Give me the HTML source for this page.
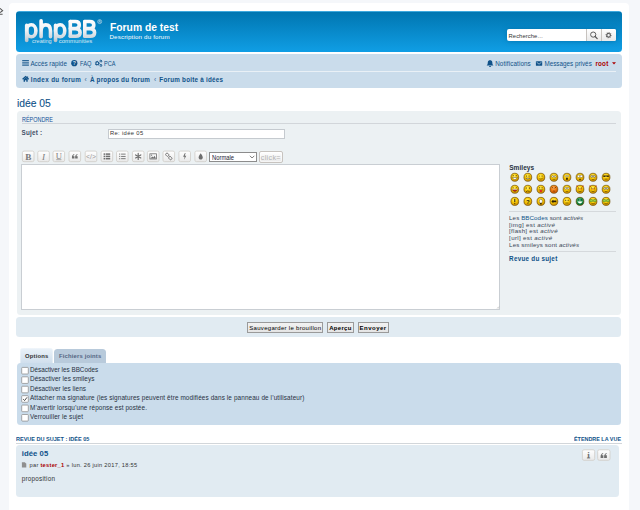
<!DOCTYPE html>
<html><head><meta charset="utf-8"><title>phpBB</title>
<style>
html,body{margin:0;padding:0;}
body{width:640px;height:510px;overflow:hidden;background:#F5F7FA;position:relative;font-family:"Liberation Sans",sans-serif;}
.a{position:absolute;box-sizing:border-box;}
.t{position:absolute;white-space:pre;line-height:1;transform-origin:0 50%;font-family:"Liberation Sans",sans-serif;}
.t i{font-style:italic;}
.wrap{left:8.6px;top:2.75px;width:620.9px;height:520px;background:#fff;border:none;border-radius:4px;}
.header{left:16px;top:10.5px;width:605.5px;height:41.3px;border-radius:3.5px;
 background:linear-gradient(to bottom,#6ACEFF 0,#0076B1 1.2px,#12A3EB 46px);}
.navbar{left:16px;top:54.1px;width:605.8px;height:33.9px;border-radius:3.5px;background:#CADCEB;}
.navsep{left:21.4px;top:71px;width:594.6px;height:1px;background:#E9F0F6;}
.panel{border-radius:3.5px;}
.p1{left:16.5px;top:111px;width:604.7px;height:203.6px;background:#ECF1F3;}
.p2{left:16.4px;top:316.7px;width:604.8px;height:20.6px;background:#E1EBF2;}
.p3{left:16.6px;top:363.3px;width:604.9px;height:61.6px;background:#CADCEB;}
.post{left:16.3px;top:445px;width:602.7px;height:52px;background:#E1EBF2;border-radius:3.5px;}
.hline{height:1px;background:#D2D6DA;}
.input{background:#fff;border:1px solid #C5CACF;}
.btn{border:1px solid #C7C3BF;border-radius:2px;background:linear-gradient(#FFFFFF,#E9E9E9);box-shadow:0 0 0 0.5px #fff inset;}
.sbtn{border:1px solid #9A9A9A;background:linear-gradient(#F2F2F2,#E4E4E4);}
.cb{width:7.5px;height:7.5px;background:#fff;border:1px solid #777;border-radius:1px;}
.tab{border-radius:3.5px 3.5px 0 0;}
svg{position:absolute;overflow:visible;}

</style></head>
<body>
<div class="a wrap"></div>
<div class="a header"></div>
<div class="a navbar"></div>
<div class="a navsep"></div>
<div class="a panel p1"></div>
<div class="a hline" style="left:21.6px;top:122.8px;width:594.6px;"></div>
<div class="a input" style="left:107.8px;top:128.9px;width:177.5px;height:9.7px;"></div>
<div class="a input" style="left:21.2px;top:164.2px;width:478.9px;height:145.6px;border-color:#C9CED3;"></div>
<div class="a hline" style="left:509.1px;top:210.7px;width:107.1px;background:#D5D9DC"></div>
<div class="a hline" style="left:509.1px;top:250.9px;width:107.1px;background:#D5D9DC"></div>
<div class="a panel p2"></div>
<div class="a sbtn" style="left:247.3px;top:322.3px;width:75.7px;height:10.3px;"></div>
<div class="a sbtn" style="left:327px;top:322.3px;width:26.5px;height:10.3px;"></div>
<div class="a sbtn" style="left:357.5px;top:322.3px;width:31.1px;height:10.3px;"></div>
<div class="a tab" style="left:20.3px;top:348.1px;width:32.5px;height:16px;background:linear-gradient(#EAF2F9,#CFDEEC);box-shadow:inset 0 0 0 0.5px #F4F8FB;"></div>
<div class="a tab" style="left:54px;top:349px;width:51.6px;height:14px;background:#B8CADB;"></div>
<div class="a panel p3"></div>
<div class="a hline" style="left:16.3px;top:443px;width:605.5px;"></div>
<div class="a post"></div>
<div class="a" style="left:507.1px;top:29.1px;width:109.1px;height:12.2px;background:#fff;border-radius:2px;box-shadow:0 0 5px #0075B0;"></div>
<div class="a" style="left:586.3px;top:29.1px;width:14.7px;height:12.2px;background:linear-gradient(#FFFFFF,#E9E9E9);border-left:1px solid #C7C3BF;"></div>
<div class="a" style="left:601px;top:29.1px;width:15.2px;height:12.2px;background:linear-gradient(#FFFFFF,#E9E9E9);border-left:1px solid #C7C3BF;border-radius:0 2px 2px 0;"></div>
<div class="a input" style="left:209.4px;top:152.1px;width:47.2px;height:9.8px;border-color:#8C8C8C;"></div>
<div class="a btn" style="left:258.7px;top:150.6px;width:24.2px;height:12.2px;"></div>
<svg class="ov" width="640" height="510" viewBox="0 0 640 510" style="left:0;top:0;position:absolute;">
<defs>
<linearGradient id="lg" x1="0" y1="19" x2="0" y2="42" gradientUnits="userSpaceOnUse">
<stop offset="0" stop-color="#FFFFFF"/><stop offset="0.5" stop-color="#EEF1F4"/><stop offset="0.85" stop-color="#CCD4DB"/><stop offset="1" stop-color="#B4BFC8"/></linearGradient>
<radialGradient id="sm" cx="0.45" cy="0.35" r="0.65"><stop offset="0" stop-color="#FFF070"/><stop offset="0.5" stop-color="#F8C800"/><stop offset="1" stop-color="#C08000"/></radialGradient>
<radialGradient id="smr" cx="0.45" cy="0.35" r="0.65"><stop offset="0" stop-color="#FFB060"/><stop offset="0.5" stop-color="#F07A10"/><stop offset="1" stop-color="#C04A00"/></radialGradient>
<radialGradient id="smg" cx="0.45" cy="0.35" r="0.65"><stop offset="0" stop-color="#6AD08A"/><stop offset="0.5" stop-color="#1E9A4A"/><stop offset="1" stop-color="#0A5A2A"/></radialGradient>
</defs>
<defs><linearGradient id="btg" x1="0" y1="0" x2="0" y2="1"><stop offset="0" stop-color="#FFFFFF"/><stop offset="1" stop-color="#E9E9E9"/></linearGradient></defs>
<path d="M0,8.3 L2.6,10.6 L0,12.6 M0,14.2 L2.6,14.2" stroke="#555" stroke-width="1.1" fill="none"/>
<g>
<path d="M26.7,25.4 V40.4" stroke="url(#lg)" stroke-width="3.6" fill="none" stroke-linecap="round" stroke-linejoin="round"/><ellipse cx="31.3" cy="30.8" rx="4.6" ry="6.0" stroke="url(#lg)" stroke-width="3.6" fill="none" stroke-linecap="round" stroke-linejoin="round"/>
<path d="M41.1,20.8 V36.8 M41.1,31 C41.1,27 43,24.9 45.8,24.9 C48.6,24.9 50.5,27 50.5,31 V36.8" stroke="url(#lg)" stroke-width="3.6" fill="none" stroke-linecap="round" stroke-linejoin="round"/>
<path d="M55.55,25.4 V40.4" stroke="url(#lg)" stroke-width="3.6" fill="none" stroke-linecap="round" stroke-linejoin="round"/><ellipse cx="60.150000000000006" cy="30.8" rx="4.6" ry="6.0" stroke="url(#lg)" stroke-width="3.6" fill="none" stroke-linecap="round" stroke-linejoin="round"/>
<path d="M70.3,21.5 H75.3 C78.1,21.5 79.3,23.1 79.3,25.0 C79.3,26.9 78.1,28.6 75.6,28.6 H70.3 M75.6,28.6 C78.6,28.6 80.1,30.4 80.1,32.4 C80.1,34.5 78.6,36.2 75.8,36.2 H70.3" stroke="url(#lg)" stroke-width="3.6" fill="none" stroke-linecap="round" stroke-linejoin="round"/><path d="M70.3,21.5 V36.2" stroke="url(#lg)" stroke-width="3.6" fill="none" stroke-linecap="round" stroke-linejoin="round"/>
<path d="M84.8,21.5 H89.8 C92.6,21.5 93.8,23.1 93.8,25.0 C93.8,26.9 92.6,28.6 90.1,28.6 H84.8 M90.1,28.6 C93.1,28.6 94.6,30.4 94.6,32.4 C94.6,34.5 93.1,36.2 90.3,36.2 H84.8" stroke="url(#lg)" stroke-width="3.6" fill="none" stroke-linecap="round" stroke-linejoin="round"/><path d="M84.8,21.5 V36.2" stroke="url(#lg)" stroke-width="3.6" fill="none" stroke-linecap="round" stroke-linejoin="round"/>
</g>
<circle cx="99.7" cy="21.6" r="2.0" stroke="#DDE8F0" stroke-width="0.55" fill="none"/>
<path d="M99.1,22.8 V20.5 H100 C100.7,20.5 100.7,21.6 100,21.6 H99.1 M100,21.6 L100.5,22.8" stroke="#DDE8F0" stroke-width="0.45" fill="none"/>
<text x="32" y="43.3" font-family="Liberation Sans" font-size="4.6" fill="#D8E8F3" textLength="19.6" lengthAdjust="spacingAndGlyphs">creating</text>
<text x="58.7" y="43.3" font-family="Liberation Sans" font-size="4.6" fill="#D8E8F3" textLength="33.7" lengthAdjust="spacingAndGlyphs">communities</text>
<circle cx="593.2" cy="34.6" r="2.6" stroke="#555" stroke-width="0.95" fill="none"/>
<path d="M595.1,36.5 L597.2,38.6" stroke="#555" stroke-width="1.2" stroke-linecap="round"/>
<path d="M611.69,35.50 L611.57,36.10 L610.57,36.25 L610.33,36.62 L610.57,37.60 L610.06,37.93 L609.25,37.34 L608.82,37.42 L608.30,38.29 L607.70,38.17 L607.55,37.17 L607.18,36.93 L606.20,37.17 L605.87,36.66 L606.46,35.85 L606.38,35.42 L605.51,34.90 L605.63,34.30 L606.63,34.15 L606.87,33.78 L606.63,32.80 L607.14,32.47 L607.95,33.06 L608.38,32.98 L608.90,32.11 L609.50,32.23 L609.65,33.23 L610.02,33.47 L611.00,33.23 L611.33,33.74 L610.74,34.55 L610.82,34.98 Z M609.84,35.20 A1.24,1.24 0 1,0 607.36,35.20 A1.24,1.24 0 1,0 609.84,35.20 Z" fill="#606060" fill-rule="evenodd"/>
<rect x="22.2" y="60.150000000000006" width="6.7" height="1.1" fill="#105289"/>
<rect x="22.2" y="62.35" width="6.7" height="1.1" fill="#105289"/>
<rect x="22.2" y="64.55" width="6.7" height="1.1" fill="#105289"/>
<circle cx="74.3" cy="63.2" r="3.1" fill="#105289"/>
<text x="74.3" y="65.2" font-family="Liberation Sans" font-weight="bold" font-size="5.2" fill="#CADCEB" text-anchor="middle">?</text>
<path d="M99.79,63.55 L99.69,64.03 L98.89,64.15 L98.69,64.44 L98.89,65.23 L98.48,65.50 L97.82,65.02 L97.48,65.09 L97.05,65.79 L96.57,65.69 L96.45,64.89 L96.16,64.69 L95.37,64.89 L95.10,64.48 L95.58,63.82 L95.51,63.48 L94.81,63.05 L94.91,62.57 L95.71,62.45 L95.91,62.16 L95.71,61.37 L96.12,61.10 L96.78,61.58 L97.12,61.51 L97.55,60.81 L98.03,60.91 L98.15,61.71 L98.44,61.91 L99.23,61.71 L99.50,62.12 L99.02,62.78 L99.09,63.12 Z M98.25,63.30 A0.95,0.95 0 1,0 96.35,63.30 A0.95,0.95 0 1,0 98.25,63.30 Z" fill="#105289" fill-rule="evenodd"/>
<path d="M102.39,61.30 L102.29,61.67 L101.76,61.76 L101.56,61.96 L101.47,62.49 L101.10,62.59 L100.76,62.17 L100.49,62.10 L99.99,62.29 L99.71,62.01 L99.90,61.51 L99.83,61.24 L99.41,60.90 L99.51,60.53 L100.04,60.44 L100.24,60.24 L100.33,59.71 L100.70,59.61 L101.04,60.03 L101.31,60.10 L101.81,59.91 L102.09,60.19 L101.90,60.69 L101.97,60.96 Z M101.43,61.10 A0.52,0.52 0 1,0 100.38,61.10 A0.52,0.52 0 1,0 101.43,61.10 Z" fill="#105289" fill-rule="evenodd"/>
<path d="M102.39,65.60 L102.29,65.97 L101.76,66.06 L101.56,66.26 L101.47,66.79 L101.10,66.89 L100.76,66.47 L100.49,66.40 L99.99,66.59 L99.71,66.31 L99.90,65.81 L99.83,65.54 L99.41,65.20 L99.51,64.83 L100.04,64.74 L100.24,64.54 L100.33,64.01 L100.70,63.91 L101.04,64.33 L101.31,64.40 L101.81,64.21 L102.09,64.49 L101.90,64.99 L101.97,65.26 Z M101.43,65.40 A0.52,0.52 0 1,0 100.38,65.40 A0.52,0.52 0 1,0 101.43,65.40 Z" fill="#105289" fill-rule="evenodd"/>
<path d="M486.6,65.6 C487.9,64.4 487.7,63.4 487.8,62.3 C488,60.9 488.9,60.3 490.05,60.3 C491.2,60.3 492.1,60.9 492.3,62.3 C492.4,63.4 492.2,64.4 493.5,65.6 Z" fill="#105289"/>
<path d="M489,66 A1.05,1.05 0 0,0 491.1,66 Z" fill="#105289"/>
<rect x="535.9" y="61.3" width="6.3" height="4.4" rx="0.5" fill="#105289"/>
<path d="M536.6,62.2 L539.05,64.2 L541.5,62.2" stroke="#CADCEB" stroke-width="0.7" fill="none"/>
<path d="M612,62.3 L616,62.3 L614,64.6 Z" fill="#AA0000"/>
<path d="M22.6,79.3 L25.65,76.5 L28.7,79.3" stroke="#105289" stroke-width="1.2" fill="none" stroke-linejoin="miter"/>
<path d="M23.6,79.2 L25.65,77.4 L27.7,79.2 V81.7 H26.3 V80.2 H25 V81.7 H23.6 Z" fill="#105289"/>
<rect x="27.2" y="76.4" width="0.9" height="1.8" fill="#105289"/>
<rect x="22.4" y="151.1" width="11.6" height="10.6" rx="1.6" fill="url(#btg)" stroke="#D3D0CC" stroke-width="0.9"/>
<rect x="37.75" y="151.1" width="11.6" height="10.6" rx="1.6" fill="url(#btg)" stroke="#D3D0CC" stroke-width="0.9"/>
<rect x="53.0" y="151.1" width="11.6" height="10.6" rx="1.6" fill="url(#btg)" stroke="#D3D0CC" stroke-width="0.9"/>
<rect x="69.0" y="151.1" width="11.6" height="10.6" rx="1.6" fill="url(#btg)" stroke="#D3D0CC" stroke-width="0.9"/>
<rect x="85.2" y="151.1" width="11.6" height="10.6" rx="1.6" fill="url(#btg)" stroke="#D3D0CC" stroke-width="0.9"/>
<rect x="101.1" y="151.1" width="11.6" height="10.6" rx="1.6" fill="url(#btg)" stroke="#D3D0CC" stroke-width="0.9"/>
<rect x="116.5" y="151.1" width="11.6" height="10.6" rx="1.6" fill="url(#btg)" stroke="#D3D0CC" stroke-width="0.9"/>
<rect x="132.4" y="151.1" width="11.6" height="10.6" rx="1.6" fill="url(#btg)" stroke="#D3D0CC" stroke-width="0.9"/>
<rect x="147.4" y="151.1" width="11.6" height="10.6" rx="1.6" fill="url(#btg)" stroke="#D3D0CC" stroke-width="0.9"/>
<rect x="163.0" y="151.1" width="11.6" height="10.6" rx="1.6" fill="url(#btg)" stroke="#D3D0CC" stroke-width="0.9"/>
<rect x="178.9" y="151.1" width="11.6" height="10.6" rx="1.6" fill="url(#btg)" stroke="#D3D0CC" stroke-width="0.9"/>
<rect x="194.9" y="151.1" width="11.6" height="10.6" rx="1.6" fill="url(#btg)" stroke="#D3D0CC" stroke-width="0.9"/>
<text x="28.2" y="159.70000000000002" font-family="Liberation Serif" font-weight="bold" font-size="9.2" fill="#7A7A7A" text-anchor="middle">B</text>
<text x="43.55" y="159.70000000000002" font-family="Liberation Serif" font-style="italic" font-size="9.2" fill="#7A7A7A" text-anchor="middle">I</text>
<text x="58.8" y="158.9" font-family="Liberation Serif" font-size="8.6" fill="#7A7A7A" text-anchor="middle">U</text>
<rect x="56.199999999999996" y="159.5" width="5.2" height="0.6" fill="#7A7A7A"/>
<g transform="translate(71.95,155.20000000000002) scale(1.0)" fill="#6E6E6E"><path d="M0,1.8 C0,0.6 0.8,-0.6 2.2,-1.2 L2.5,-0.6 C1.7,-0.2 1.3,0.4 1.3,1 H2.5 V3.4 H0 Z"/><path d="M3.2,1.8 C3.2,0.6 4,-0.6 5.4,-1.2 L5.7,-0.6 C4.9,-0.2 4.5,0.4 4.5,1 H5.7 V3.4 H3.2 Z"/></g>
<text x="91.0" y="158.70000000000002" font-family="Liberation Sans" font-size="6.8" fill="#9A9A9A" text-anchor="middle">&lt;/&gt;</text>
<rect x="103.6" y="153.35" width="1.5" height="1.5" fill="#6E6E6E"/><rect x="105.69999999999999" y="153.35" width="4.5" height="1.5" fill="#6E6E6E"/>
<rect x="103.6" y="155.65" width="1.5" height="1.5" fill="#6E6E6E"/><rect x="105.69999999999999" y="155.65" width="4.5" height="1.5" fill="#6E6E6E"/>
<rect x="103.6" y="157.95" width="1.5" height="1.5" fill="#6E6E6E"/><rect x="105.69999999999999" y="157.95" width="4.5" height="1.5" fill="#6E6E6E"/>
<rect x="119.3" y="153.5" width="0.9" height="1.2" fill="#6E6E6E"/><rect x="121.1" y="153.65" width="4.5" height="0.9" fill="#6E6E6E"/>
<rect x="119.3" y="155.8" width="0.9" height="1.2" fill="#6E6E6E"/><rect x="121.1" y="155.95000000000002" width="4.5" height="0.9" fill="#6E6E6E"/>
<rect x="119.3" y="158.1" width="0.9" height="1.2" fill="#6E6E6E"/><rect x="121.1" y="158.25" width="4.5" height="0.9" fill="#6E6E6E"/>
<g stroke="#6E6E6E" stroke-width="1.2" stroke-linecap="round"><path d="M138.20000000000002,153.4 V159.4 M135.60000000000002,154.9 L140.8,157.9 M135.60000000000002,157.9 L140.8,154.9"/></g>
<rect x="149.9" y="153.8" width="6.6" height="5.2" fill="none" stroke="#6E6E6E" stroke-width="0.8"/>
<path d="M150.50000000000003,158.4 L152.20000000000002,156.4 L153.4,157.4 L154.60000000000002,155.8 L155.9,158.4 Z" fill="#6E6E6E"/><circle cx="151.60000000000002" cy="155.20000000000002" r="0.6" fill="#6E6E6E"/>
<g stroke="#6E6E6E" stroke-width="0.9" fill="none"><rect x="165.60000000000002" y="153.4" width="3.4" height="2.6" rx="1.2" transform="rotate(45 167.3 154.70000000000002)"/><rect x="168.60000000000002" y="156.8" width="3.4" height="2.6" rx="1.2" transform="rotate(45 170.3 158.1)"/></g>
<path d="M184.9,153.0 L183.10000000000002,156.8 L184.60000000000002,156.8 L184.10000000000002,159.8 L186.3,155.8 L184.8,155.8 L185.60000000000002,153.0 Z" fill="#6E6E6E"/>
<path d="M200.70000000000002,153.20000000000002 C201.50000000000003,154.8 202.8,155.8 202.8,157.5 C202.8,158.8 201.8,159.6 200.70000000000002,159.6 C199.60000000000002,159.6 198.60000000000002,158.8 198.60000000000002,157.5 C198.60000000000002,155.8 199.9,154.8 200.70000000000002,153.20000000000002 Z" fill="#6E6E6E"/>
<path d="M249.9,155.8 L252.1,158 L254.3,155.8" stroke="#444" stroke-width="0.7" fill="none"/>
<path d="M497.2,308.4 L498.9,306.7 M498.4,308.4 L498.9,307.9" stroke="#888" stroke-width="0.5"/>
<ellipse cx="514.8" cy="177.3" rx="3.9" ry="4.05" fill="url(#sm)" stroke="#6E4C00" stroke-width="0.65"/><path d="M512.1999999999999,177.5 Q514.8,181.5 517.4,177.5 Z" fill="#fff" stroke="#2A1C00" stroke-width="0.35"/><path d="M512.5999999999999,175.70000000000002 h1.4 M515.5999999999999,175.70000000000002 h1.4" stroke="#2A1C00" stroke-width="0.6"/>
<ellipse cx="527.84" cy="177.3" rx="3.9" ry="4.05" fill="url(#sm)" stroke="#6E4C00" stroke-width="0.65"/><circle cx="526.64" cy="176.0" r="0.55" fill="#2A1C00"/><circle cx="529.0400000000001" cy="176.0" r="0.55" fill="#2A1C00"/><path d="M525.84,178.20000000000002 Q527.84,180.3 529.84,178.20000000000002 Z" fill="#eee" stroke="#2A1C00" stroke-width="0.35"/>
<ellipse cx="540.88" cy="177.3" rx="3.9" ry="4.05" fill="url(#sm)" stroke="#6E4C00" stroke-width="0.65"/><path d="M539.08,176.10000000000002 h1.1" stroke="#2A1C00" stroke-width="0.5"/><circle cx="542.08" cy="176.0" r="0.5" fill="#2A1C00"/><path d="M539.28,178.70000000000002 Q540.88,179.70000000000002 542.68,178.3" stroke="#2A1C00" stroke-width="0.45" fill="none"/>
<ellipse cx="553.92" cy="177.3" rx="3.9" ry="4.05" fill="url(#sm)" stroke="#6E4C00" stroke-width="0.65"/><circle cx="552.62" cy="176.5" r="1" fill="#ddd" stroke="#2A1C00" stroke-width="0.3"/><circle cx="555.2199999999999" cy="176.5" r="1" fill="#ddd" stroke="#2A1C00" stroke-width="0.3"/><path d="M552.62,179.3 h2.6" stroke="#2A1C00" stroke-width="0.45"/>
<ellipse cx="566.96" cy="177.3" rx="3.9" ry="4.05" fill="url(#sm)" stroke="#6E4C00" stroke-width="0.65"/><circle cx="565.86" cy="175.9" r="0.8" fill="#fff" stroke="#2A1C00" stroke-width="0.3"/><circle cx="568.0600000000001" cy="175.9" r="0.8" fill="#fff" stroke="#2A1C00" stroke-width="0.3"/><ellipse cx="566.96" cy="178.8" rx="0.9" ry="1.3" fill="#2A1C00"/>
<ellipse cx="580.0" cy="177.3" rx="3.9" ry="4.05" fill="url(#sm)" stroke="#6E4C00" stroke-width="0.65"/><circle cx="578.7" cy="176.3" r="1.3" fill="#fff" stroke="#2A1C00" stroke-width="0.35"/><circle cx="581.3" cy="176.3" r="1.3" fill="#fff" stroke="#2A1C00" stroke-width="0.35"/><circle cx="580.0" cy="179.3" r="0.8" fill="#2A1C00"/>
<ellipse cx="593.04" cy="177.3" rx="3.9" ry="4.05" fill="url(#sm)" stroke="#6E4C00" stroke-width="0.65"/><circle cx="591.74" cy="176.4" r="1.1" fill="#ccc" stroke="#2A1C00" stroke-width="0.35"/><circle cx="594.3399999999999" cy="176.4" r="1.1" fill="#ccc" stroke="#2A1C00" stroke-width="0.35"/><path d="M591.64,179.3 Q593.04,180.10000000000002 594.4399999999999,179.3" stroke="#2A1C00" stroke-width="0.45" fill="none"/>
<ellipse cx="606.08" cy="177.3" rx="3.9" ry="4.05" fill="url(#sm)" stroke="#6E4C00" stroke-width="0.65"/><path d="M603.08,175.5 H609.08 V176.60000000000002 Q607.88,177.5 606.48,176.60000000000002 H605.6800000000001 Q604.2800000000001,177.5 603.08,176.60000000000002 Z" fill="#2A1C00"/><path d="M604.6800000000001,179.10000000000002 h2.8" stroke="#2A1C00" stroke-width="0.5"/>
<ellipse cx="514.8" cy="189.3" rx="3.9" ry="4.05" fill="url(#sm)" stroke="#6E4C00" stroke-width="0.65"/><path d="M512.5999999999999,187.4 l1.3,0.6 M517.0,187.4 l-1.3,0.6" stroke="#2A1C00" stroke-width="0.5"/><path d="M512.0999999999999,189.3 Q514.8,193.9 517.5,189.3 Z" fill="#C02020" stroke="#2A1C00" stroke-width="0.35"/><path d="M512.3,189.4 H517.3" stroke="#fff" stroke-width="0.6"/>
<ellipse cx="527.84" cy="189.3" rx="3.9" ry="4.05" fill="url(#sm)" stroke="#6E4C00" stroke-width="0.65"/><path d="M526.24,187.3 v1.6 M529.44,187.3 v1.6" stroke="#2A1C00" stroke-width="0.6"/><path d="M526.0400000000001,191.70000000000002 Q527.84,189.9 529.64,191.70000000000002" stroke="#2A1C00" stroke-width="0.6" fill="none"/>
<ellipse cx="540.88" cy="189.3" rx="3.9" ry="4.05" fill="url(#sm)" stroke="#6E4C00" stroke-width="0.65"/><circle cx="539.68" cy="187.8" r="0.55" fill="#2A1C00"/><circle cx="542.08" cy="187.8" r="0.55" fill="#2A1C00"/><path d="M538.68,189.9 H543.08" stroke="#2A1C00" stroke-width="0.5"/><ellipse cx="540.88" cy="191.10000000000002" rx="1.4" ry="1.1" fill="#E02828"/>
<ellipse cx="553.92" cy="189.3" rx="3.9" ry="4.05" fill="url(#smr)" stroke="#6E4C00" stroke-width="0.65"/><path d="M551.8199999999999,187.20000000000002 l1.5,1 M556.02,187.20000000000002 l-1.5,1" stroke="#2A1C00" stroke-width="0.6"/><path d="M552.92,191.3 Q553.92,190.5 554.92,191.3" stroke="#2A1C00" stroke-width="0.5" fill="none"/>
<ellipse cx="566.96" cy="189.3" rx="3.9" ry="4.05" fill="url(#sm)" stroke="#6E4C00" stroke-width="0.65"/><circle cx="565.6600000000001" cy="188.3" r="1.1" fill="#ddd" stroke="#2A1C00" stroke-width="0.3"/><circle cx="568.26" cy="188.3" r="1.1" fill="#ddd" stroke="#2A1C00" stroke-width="0.3"/><path d="M565.76,191.4 h2.4" stroke="#2A1C00" stroke-width="0.45"/>
<ellipse cx="580.0" cy="189.3" rx="3.9" ry="4.05" fill="url(#sm)" stroke="#6E4C00" stroke-width="0.65"/><path d="M576.4,187.10000000000002 l0.3,-2 l1.4,1.2 Z M583.6,187.10000000000002 l-0.3,-2 l-1.4,1.2 Z" fill="#C04000"/><path d="M578.0,187.70000000000002 l1.4,0.9 M582.0,187.70000000000002 l-1.4,0.9" stroke="#2A1C00" stroke-width="0.6"/><circle cx="578.9" cy="188.9" r="0.5" fill="#C00000"/><circle cx="581.1" cy="188.9" r="0.5" fill="#C00000"/><path d="M578.4,191.10000000000002 Q580.0,192.10000000000002 581.6,191.10000000000002" stroke="#2A1C00" stroke-width="0.5" fill="none"/>
<ellipse cx="593.04" cy="189.3" rx="3.9" ry="4.05" fill="url(#sm)" stroke="#6E4C00" stroke-width="0.65"/><path d="M589.4399999999999,187.10000000000002 l0.3,-2 l1.4,1.2 Z M596.64,187.10000000000002 l-0.3,-2 l-1.4,1.2 Z" fill="#C04000"/><path d="M591.04,187.70000000000002 l1.4,0.9 M595.04,187.70000000000002 l-1.4,0.9" stroke="#2A1C00" stroke-width="0.6"/><circle cx="591.9399999999999" cy="188.9" r="0.5" fill="#C00000"/><circle cx="594.14" cy="188.9" r="0.5" fill="#C00000"/><path d="M591.4399999999999,191.10000000000002 Q593.04,192.10000000000002 594.64,191.10000000000002" stroke="#2A1C00" stroke-width="0.5" fill="none"/>
<ellipse cx="606.08" cy="189.3" rx="3.9" ry="4.05" fill="url(#sm)" stroke="#6E4C00" stroke-width="0.65"/><circle cx="604.7800000000001" cy="188.4" r="1.1" fill="#ccc" stroke="#2A1C00" stroke-width="0.35"/><circle cx="607.38" cy="188.4" r="1.1" fill="#ccc" stroke="#2A1C00" stroke-width="0.35"/><path d="M604.6800000000001,191.3 Q606.08,192.10000000000002 607.48,191.3" stroke="#2A1C00" stroke-width="0.45" fill="none"/>
<ellipse cx="514.8" cy="201.4" rx="3.9" ry="4.05" fill="url(#sm)" stroke="#6E4C00" stroke-width="0.65"/><path d="M514.8,198.8 V202.20000000000002" stroke="#2A1C00" stroke-width="1"/><circle cx="514.8" cy="203.6" r="0.55" fill="#2A1C00"/>
<ellipse cx="527.84" cy="201.4" rx="3.9" ry="4.05" fill="url(#sm)" stroke="#6E4C00" stroke-width="0.65"/><text x="527.84" y="203.8" font-family="Liberation Sans" font-weight="bold" font-size="6" fill="#2A1C00" text-anchor="middle">?</text>
<ellipse cx="540.88" cy="201.4" rx="3.9" ry="4.05" fill="url(#sm)" stroke="#6E4C00" stroke-width="0.65"/><ellipse cx="540.88" cy="201.20000000000002" rx="1.5" ry="2" fill="#fff" stroke="#2A1C00" stroke-width="0.35"/><rect x="540.08" y="203.1" width="1.6" height="1.3" fill="#2A1C00"/>
<ellipse cx="553.92" cy="201.4" rx="3.9" ry="4.05" fill="url(#sm)" stroke="#6E4C00" stroke-width="0.65"/><path d="M551.3199999999999,201.4 L553.3199999999999,199.6 V200.6 H556.3199999999999 V202.3 H553.3199999999999 V203.20000000000002 Z" fill="#2A1C00"/>
<ellipse cx="566.96" cy="201.4" rx="3.9" ry="4.05" fill="url(#sm)" stroke="#6E4C00" stroke-width="0.65"/><circle cx="565.76" cy="200.20000000000002" r="0.55" fill="#2A1C00"/><circle cx="568.1600000000001" cy="200.20000000000002" r="0.55" fill="#2A1C00"/><path d="M565.46,203.0 h3" stroke="#2A1C00" stroke-width="0.5"/>
<ellipse cx="580.0" cy="201.4" rx="3.9" ry="4.05" fill="url(#smg)" stroke="#6E4C00" stroke-width="0.65"/><path d="M577.4,201.5 Q580.0,205.4 582.6,201.5 Z" fill="#fff"/><circle cx="578.8" cy="199.9" r="0.6" fill="#002"/><circle cx="581.2" cy="199.9" r="0.6" fill="#002"/>
<ellipse cx="593.04" cy="201.4" rx="3.9" ry="4.05" fill="url(#sm)" stroke="#6E4C00" stroke-width="0.65"/><rect x="589.8399999999999" y="199.5" width="2.8" height="2.2" rx="0.6" fill="#9AD44A" stroke="#2A6A10" stroke-width="0.4"/><rect x="593.4399999999999" y="199.5" width="2.8" height="2.2" rx="0.6" fill="#9AD44A" stroke="#2A6A10" stroke-width="0.4"/><path d="M591.4399999999999,203.4 Q593.04,204.4 594.64,203.4" stroke="#2A1C00" stroke-width="0.5" fill="none"/>
<ellipse cx="606.08" cy="201.4" rx="3.9" ry="4.05" fill="url(#sm)" stroke="#6E4C00" stroke-width="0.65"/><rect x="602.88" y="199.5" width="2.8" height="2.2" rx="0.6" fill="#9AD44A" stroke="#2A6A10" stroke-width="0.4"/><rect x="606.48" y="199.5" width="2.8" height="2.2" rx="0.6" fill="#9AD44A" stroke="#2A6A10" stroke-width="0.4"/><path d="M604.48,203.4 Q606.08,204.4 607.6800000000001,203.4" stroke="#2A1C00" stroke-width="0.5" fill="none"/>
<rect x="21.7" y="367.4" width="6.6" height="6.6" rx="0.8" fill="#fff" stroke="#858585" stroke-width="0.7"/>
<rect x="21.7" y="376.82" width="6.6" height="6.6" rx="0.8" fill="#fff" stroke="#858585" stroke-width="0.7"/>
<rect x="21.7" y="386.23999999999995" width="6.6" height="6.6" rx="0.8" fill="#fff" stroke="#858585" stroke-width="0.7"/>
<rect x="21.7" y="395.65999999999997" width="6.6" height="6.6" rx="0.8" fill="#fff" stroke="#858585" stroke-width="0.7"/>
<rect x="21.7" y="405.08" width="6.6" height="6.6" rx="0.8" fill="#fff" stroke="#858585" stroke-width="0.7"/>
<rect x="21.7" y="414.5" width="6.6" height="6.6" rx="0.8" fill="#fff" stroke="#858585" stroke-width="0.7"/>
<path d="M23.2,399.15999999999997 L24.6,400.56 L27,397.36" stroke="#333" stroke-width="0.9" fill="none"/>
<path d="M21.9,462.2 H24.8 L26.3,463.7 V467.6 H21.9 Z" fill="#8F8F8F"/>
<rect x="582.4" y="449.8" width="12.3" height="10.5" rx="1.6" fill="url(#btg)" stroke="#D3D0CC" stroke-width="0.9"/>
<rect x="597.7" y="449.8" width="12.3" height="10.5" rx="1.6" fill="url(#btg)" stroke="#D3D0CC" stroke-width="0.9"/>
<text x="588.55" y="458.4" font-family="Liberation Serif" font-weight="bold" font-size="9" fill="#6E6E6E" text-anchor="middle">i</text><rect x="586.9" y="457.6" width="3.3" height="0.8" fill="#6E6E6E"/>
<g transform="translate(600.6,454.2) scale(1.1)" fill="#6E6E6E"><path d="M0,1.8 C0,0.6 0.8,-0.6 2.2,-1.2 L2.5,-0.6 C1.7,-0.2 1.3,0.4 1.3,1 H2.5 V3.4 H0 Z"/><path d="M3.2,1.8 C3.2,0.6 4,-0.6 5.4,-1.2 L5.7,-0.6 C4.9,-0.2 4.5,0.4 4.5,1 H5.7 V3.4 H3.2 Z"/></g>
</svg>
<span class="t" id="t0" style="left:109.60px;top:22.89px;font-size:10.4px;font-weight:700;color:#FFFFFF;transform:scaleX(0.9912);">Forum de test</span>
<span class="t" id="t1" style="left:109.40px;top:33.55px;font-size:6.2px;font-weight:400;color:#FFFFFF;letter-spacing:0.165px;">Description du forum</span>
<span class="t" id="t2" style="left:508.60px;top:33.69px;font-size:5.8px;font-weight:400;color:#333333;letter-spacing:0.066px;">Recherche…</span>
<span class="t" id="t3" style="left:30.40px;top:61.06px;font-size:6.3px;font-weight:400;color:#105289;letter-spacing:0.008px;">Accès rapide</span>
<span class="t" id="t4" style="left:79.60px;top:61.06px;font-size:6.3px;font-weight:400;color:#105289;transform:scaleX(0.9041);">FAQ</span>
<span class="t" id="t5" style="left:104.30px;top:61.06px;font-size:6.3px;font-weight:400;color:#105289;transform:scaleX(0.8801);">PCA</span>
<span class="t" id="t6" style="left:495.20px;top:61.06px;font-size:6.3px;font-weight:400;color:#105289;letter-spacing:0.107px;">Notifications</span>
<span class="t" id="t7" style="left:544.40px;top:61.06px;font-size:6.3px;font-weight:400;color:#105289;letter-spacing:0.010px;">Messages privés</span>
<span class="t" id="t8" style="left:595.50px;top:61.06px;font-size:6.3px;font-weight:700;color:#AA0000;letter-spacing:0.163px;">root</span>
<span class="t" id="t9" style="left:30.80px;top:76.96px;font-size:6.3px;font-weight:700;color:#105289;letter-spacing:0.358px;">Index du forum</span>
<span class="t" id="t10" style="left:84.60px;top:76.91px;font-size:6.6px;font-weight:400;color:#3B6A9A;">‹</span>
<span class="t" id="t11" style="left:89.90px;top:76.96px;font-size:6.3px;font-weight:700;color:#105289;letter-spacing:0.202px;">À propos du forum</span>
<span class="t" id="t12" style="left:154.00px;top:76.91px;font-size:6.6px;font-weight:400;color:#3B6A9A;">‹</span>
<span class="t" id="t13" style="left:159.30px;top:76.96px;font-size:6.3px;font-weight:700;color:#105289;letter-spacing:0.238px;">Forum boite à idées</span>
<span class="t" id="t14" style="left:16.50px;top:97.63px;font-size:11.3px;font-weight:400;color:#105289;transform:scaleX(0.9120);-webkit-text-stroke:0.12px #105289;">idée 05</span>
<span class="t" id="t15" style="left:21.60px;top:117.08px;font-size:6.4px;font-weight:400;color:#115098;transform:scaleX(0.8528);">RÉPONDRE</span>
<span class="t" id="t16" style="left:21.60px;top:129.86px;font-size:6.3px;font-weight:700;color:#425067;letter-spacing:0.193px;">Sujet :</span>
<span class="t" id="t17" style="left:109.90px;top:131.49px;font-size:5.8px;font-weight:400;color:#333333;letter-spacing:0.359px;">Re: idée 05</span>
<span class="t" id="t18" style="left:211.60px;top:154.56px;font-size:6.3px;font-weight:400;color:#1A1A33;transform:scaleX(0.9245);">Normale</span>
<span class="t" id="t19" style="left:260.80px;top:153.50px;font-size:7.2px;font-weight:400;color:#B2B2B2;letter-spacing:0.302px;">click=</span>
<span class="t" id="t20" style="left:509.20px;top:165.19px;font-size:6.5px;font-weight:700;color:#28313F;letter-spacing:0.060px;">Smileys</span>
<span class="t" id="t21" style="left:509.10px;top:215.05px;font-size:6.2px;font-weight:400;color:#3A4656;letter-spacing:0.081px;">Les <span style="color:#105289">BBCodes</span> sont <i>activés</i></span>
<span class="t" id="t22" style="left:509.10px;top:221.75px;font-size:6.2px;font-weight:400;color:#3A4656;letter-spacing:0.301px;">[img] est <i>activé</i></span>
<span class="t" id="t23" style="left:509.10px;top:228.05px;font-size:6.2px;font-weight:400;color:#3A4656;letter-spacing:0.246px;">[flash] est <i>activé</i></span>
<span class="t" id="t24" style="left:509.10px;top:234.95px;font-size:6.2px;font-weight:400;color:#3A4656;letter-spacing:0.320px;">[url] est <i>activé</i></span>
<span class="t" id="t25" style="left:509.10px;top:242.05px;font-size:6.2px;font-weight:400;color:#3A4656;letter-spacing:0.140px;">Les smileys sont <i>activés</i></span>
<span class="t" id="t26" style="left:509.10px;top:255.86px;font-size:6.3px;font-weight:700;color:#105289;letter-spacing:0.257px;">Revue du sujet</span>
<span class="t" id="t27" style="left:249.30px;top:325.32px;font-size:6.0px;font-weight:400;color:#000000;letter-spacing:0.290px;">Sauvegarder le brouillon</span>
<span class="t" id="t28" style="left:329.20px;top:325.32px;font-size:6.0px;font-weight:700;color:#000000;letter-spacing:0.288px;">Aperçu</span>
<span class="t" id="t29" style="left:359.60px;top:325.32px;font-size:6.0px;font-weight:700;color:#000000;letter-spacing:0.473px;">Envoyer</span>
<span class="t" id="t30" style="left:25.00px;top:353.70px;font-size:5.9px;font-weight:700;color:#333333;letter-spacing:0.176px;">Options</span>
<span class="t" id="t31" style="left:58.90px;top:353.70px;font-size:5.9px;font-weight:700;color:#536482;letter-spacing:0.171px;">Fichiers joints</span>
<span class="t" id="t32" style="left:30.00px;top:366.88px;font-size:6.4px;font-weight:400;color:#28313F;transform:scaleX(0.9883);">Désactiver les BBCodes</span>
<span class="t" id="t33" style="left:30.00px;top:376.30px;font-size:6.4px;font-weight:400;color:#28313F;letter-spacing:0.054px;">Désactiver les smileys</span>
<span class="t" id="t34" style="left:30.00px;top:385.72px;font-size:6.4px;font-weight:400;color:#28313F;letter-spacing:0.047px;">Désactiver les liens</span>
<span class="t" id="t35" style="left:30.00px;top:395.14px;font-size:6.4px;font-weight:400;color:#28313F;letter-spacing:0.108px;">Attacher ma signature (les signatures peuvent être modifiées dans le panneau de l’utilisateur)</span>
<span class="t" id="t36" style="left:30.00px;top:404.56px;font-size:6.4px;font-weight:400;color:#28313F;letter-spacing:0.083px;">M’avertir lorsqu’une réponse est postée.</span>
<span class="t" id="t37" style="left:30.00px;top:413.98px;font-size:6.4px;font-weight:400;color:#28313F;letter-spacing:0.120px;">Verrouiller le sujet</span>
<span class="t" id="t38" style="left:16.30px;top:437.26px;font-size:5.6px;font-weight:700;color:#105289;transform:scaleX(0.9879);">REVUE DU SUJET : IDÉE 05</span>
<span class="t" id="t39" style="left:573.70px;top:436.86px;font-size:5.6px;font-weight:700;color:#105289;transform:scaleX(0.9672);">ÉTENDRE LA VUE</span>
<span class="t" id="t40" style="left:21.70px;top:450.08px;font-size:7.7px;font-weight:700;color:#105289;letter-spacing:0.075px;">idée 05</span>
<span class="t" id="t41" style="left:29.50px;top:462.67px;font-size:5.7px;font-weight:400;color:#333333;letter-spacing:0.279px;">par <b style="color:#AA0000">tester_1</b> » lun. 26 juin 2017, 18:55</span>
<span class="t" id="t42" style="left:21.70px;top:475.96px;font-size:6.3px;font-weight:400;color:#333333;letter-spacing:0.253px;">proposition</span>
</body></html>
